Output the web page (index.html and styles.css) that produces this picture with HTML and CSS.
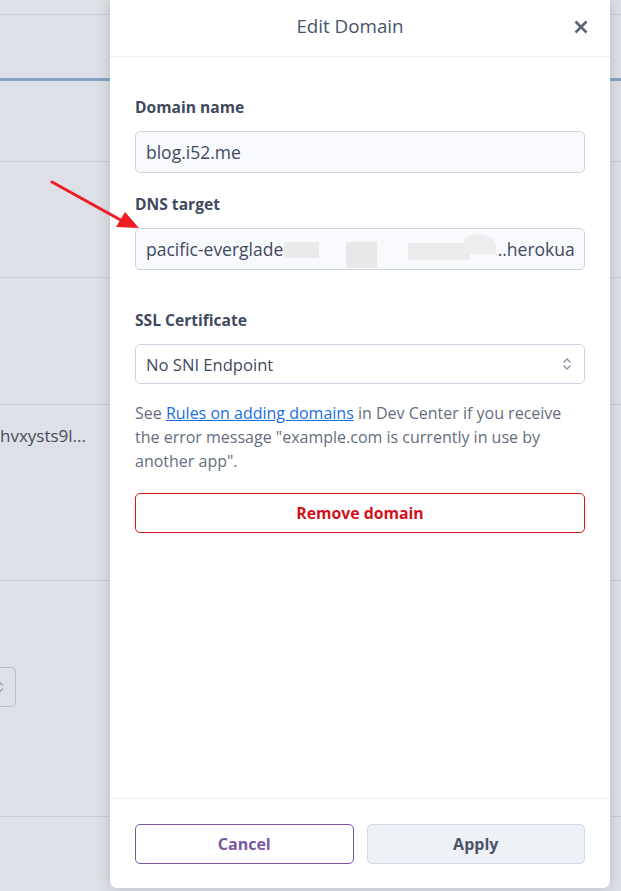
FILE: index.html
```html
<!DOCTYPE html>
<html>
<head>
<meta charset="utf-8">
<link rel="stylesheet" href="styles.css">
</head>
<body>
<div class="bg">
  <div class="bg-row r1"></div>
  <div class="bg-row r2"></div>
  <div class="bg-row r3"></div>
  <div class="bg-row r4"></div>
  <div class="bg-row r5"></div>
  <div class="bg-row r6"><span class="bg-text">hvxysts9l...</span></div>
  <div class="bg-row r7"><div class="bg-select"><svg width="8" height="12" viewBox="0 0 8 12"><path d="M0 4.5 L3 1.5 L6 4.5 M0 7.5 L3 10.5 L6 7.5" fill="none" stroke="#9aa3b3" stroke-width="1.3"/></svg></div></div>
  <div class="bg-row r8"></div>
</div>

<div class="modal">
  <div class="modal-header">
    <div class="modal-title">Edit Domain</div>
    <button class="close" aria-label="Close"><svg width="14" height="14" viewBox="0 0 14 14"><path d="M1.5 1.5 L12.5 12.5 M12.5 1.5 L1.5 12.5" stroke="#596379" stroke-width="2.6" stroke-linecap="butt"/></svg></button>
  </div>
  <div class="modal-body">
    <label class="label">Domain name</label>
    <div class="input"><div class="input-inner">blog.i52.me</div></div>
    <label class="label gap-sm">DNS target</label>
    <div class="input"><div class="input-inner"><span>pacific-everglades</span><span class="blur"><i class="b1"></i><i class="b2"></i><i class="b3"></i><i class="b4"></i><i class="b5"></i></span><span>..herokuapp.com</span></div></div>
    <label class="label gap-lg">SSL Certificate</label>
    <div class="select"><span>No SNI Endpoint</span><svg width="10" height="14" viewBox="0 0 10 14"><path d="M1.5 5.5 L5 2 L8.5 5.5 M1.5 8.5 L5 12 L8.5 8.5" fill="none" stroke="#8a93a5" stroke-width="1.4"/></svg></div>
    <p class="help">See <a href="#">Rules on adding domains</a> in Dev Center if you receive the error message "example.com is currently in use by another app".</p>
    <button class="btn-remove">Remove domain</button>
  </div>
  <div class="modal-footer">
    <button class="btn btn-cancel">Cancel</button>
    <button class="btn btn-apply">Apply</button>
  </div>
</div>

<svg class="arrow" width="100" height="60" viewBox="0 0 100 60">
  <path d="M2 3 L76 44" stroke="#ee1c25" stroke-width="3" stroke-linecap="round"/>
  <path d="M89 49 L66 48 L75 33 Z" fill="#ee1c25"/>
</svg>
</body>
</html>
```

FILE: styles.css
```css
* { box-sizing: border-box; }
html, body { margin: 0; padding: 0; }
body {
  width: 621px;
  height: 891px;
  overflow: hidden;
  background: #dde0e6;
  font-family: "Open Sans", "Noto Sans", sans-serif;
  color: #3f4a5e;
  position: relative;
}

/* background page */
.bg { display: flex; flex-direction: column; }
.bg-row { border-bottom: 1px solid #c9cdd7; }
.r1 { height: 15px; }
.r2 { height: 66px; border-bottom: 3px solid #85a2c6; }
.r3 { height: 81px; }
.r4 { height: 116px; }
.r5 { height: 127px; }
.r6 { height: 176px; padding-top: 19px; }
.r7 { height: 236px; padding-top: 86px; }
.r8 { height: 80px; border-bottom: none; }
.bg-text { display: block; margin-left: 0; font-size: 17px; line-height: 24px; color: #464d5c; }
.bg-select {
  width: 17px; height: 40px; margin-left: -1px;
  border: 1px solid #b3bccb; border-left: none;
  border-radius: 0 5px 5px 0;
  display: flex; align-items: center;
}
.bg-select svg { margin-left: -2px; }

/* modal */
.modal {
  position: absolute;
  left: 110px;
  top: 0;
  width: 500px;
  height: 888px;
  background: #fff;
  border-radius: 0 0 7px 7px;
  box-shadow: 0 0 14px rgba(40, 50, 75, 0.22);
  display: flex;
  flex-direction: column;
}
.modal-header {
  height: 57px;
  border-bottom: 1px solid #eceef3;
  display: flex;
  align-items: center;
  padding-left: 16px;
  padding-bottom: 5px;
}
.modal-title {
  flex: 1;
  text-align: center;
  font-size: 18.8px;
  color: #46546e;
}
.close {
  width: 14px; height: 14px;
  padding: 0; border: 0; background: none;
  margin-right: 22px;
  margin-top: 2px;
  display: flex;
}
.modal-body {
  flex: 1;
  padding: 39px 25px 0;
  display: flex;
  flex-direction: column;
}
.label {
  display: block;
  font-size: 15.6px;
  font-weight: 700;
  line-height: 22px;
  color: #3f4a5e;
  margin-bottom: 13px;
}
.gap-sm { margin-top: 20px; }
.gap-lg { margin-top: 39px; }
.input {
  height: 42px;
  background: #f7f9fc;
  border: 1px solid #ccd4e3;
  border-radius: 5px;
  padding: 0 10px;
  display: flex;
  align-items: center;
}
.input-inner {
  flex: 1;
  height: 40px;
  display: flex;
  align-items: center;
  overflow: hidden;
  white-space: nowrap;
  font-size: 17.5px;
  color: #3f4a5e;
}
.input-inner span { flex: none; }
.blur {
  width: 214px;
  height: 40px;
  position: relative;
  margin-left: -8px;
}
.blur i { position: absolute; display: block; }
.blur .b1 { left: 0; top: 13px; width: 35px; height: 16px; background: #eaeaea; }
.blur .b2 { left: 35px; top: 0; width: 30px; height: 40px; background: #f7f9fc; }
.blur .b3 { left: 62px; top: 13px; width: 31px; height: 26px; background: #e8e8e8; }
.blur .b4 { left: 124px; top: 14px; width: 62px; height: 17px; background: #ebebeb; }
.blur .b5 { left: 180px; top: 5px; width: 32px; height: 20px; background: #ededed; border-radius: 40% 60% 10% 10%; }
.select {
  height: 40px;
  border: 1px solid #ccd4e3;
  border-radius: 5px;
  padding: 0 12px 0 10px;
  font-size: 16.6px;
  display: flex;
  align-items: center;
  justify-content: space-between;
  background: #fff;
}
.help {
  margin: 17px 0 20px;
  font-size: 16px;
  line-height: 24px;
  color: #646d80;
}
.help a { color: #1b6ee0; text-decoration: underline; }
.btn-remove {
  height: 40px;
  border: 1px solid #e0141e;
  border-radius: 5px;
  background: #fff;
  color: #d0121b;
  font-family: inherit;
  font-size: 15.8px;
  font-weight: 700;
}
.modal-footer {
  border-top: 1px solid #eceef3;
  padding: 25px 25px 24px;
  display: flex;
  gap: 13px;
}
.btn {
  flex: 1;
  height: 40px;
  border-radius: 5px;
  font-family: inherit;
  font-size: 16px;
  font-weight: 700;
}
.btn-cancel { background: #fff; border: 1px solid #79589f; color: #79589f; }
.btn-apply { background: #eef1f6; border: 1px solid #d4dbe8; color: #4a5468; }

.arrow {
  position: absolute;
  left: 50px;
  top: 179px;
}
```
